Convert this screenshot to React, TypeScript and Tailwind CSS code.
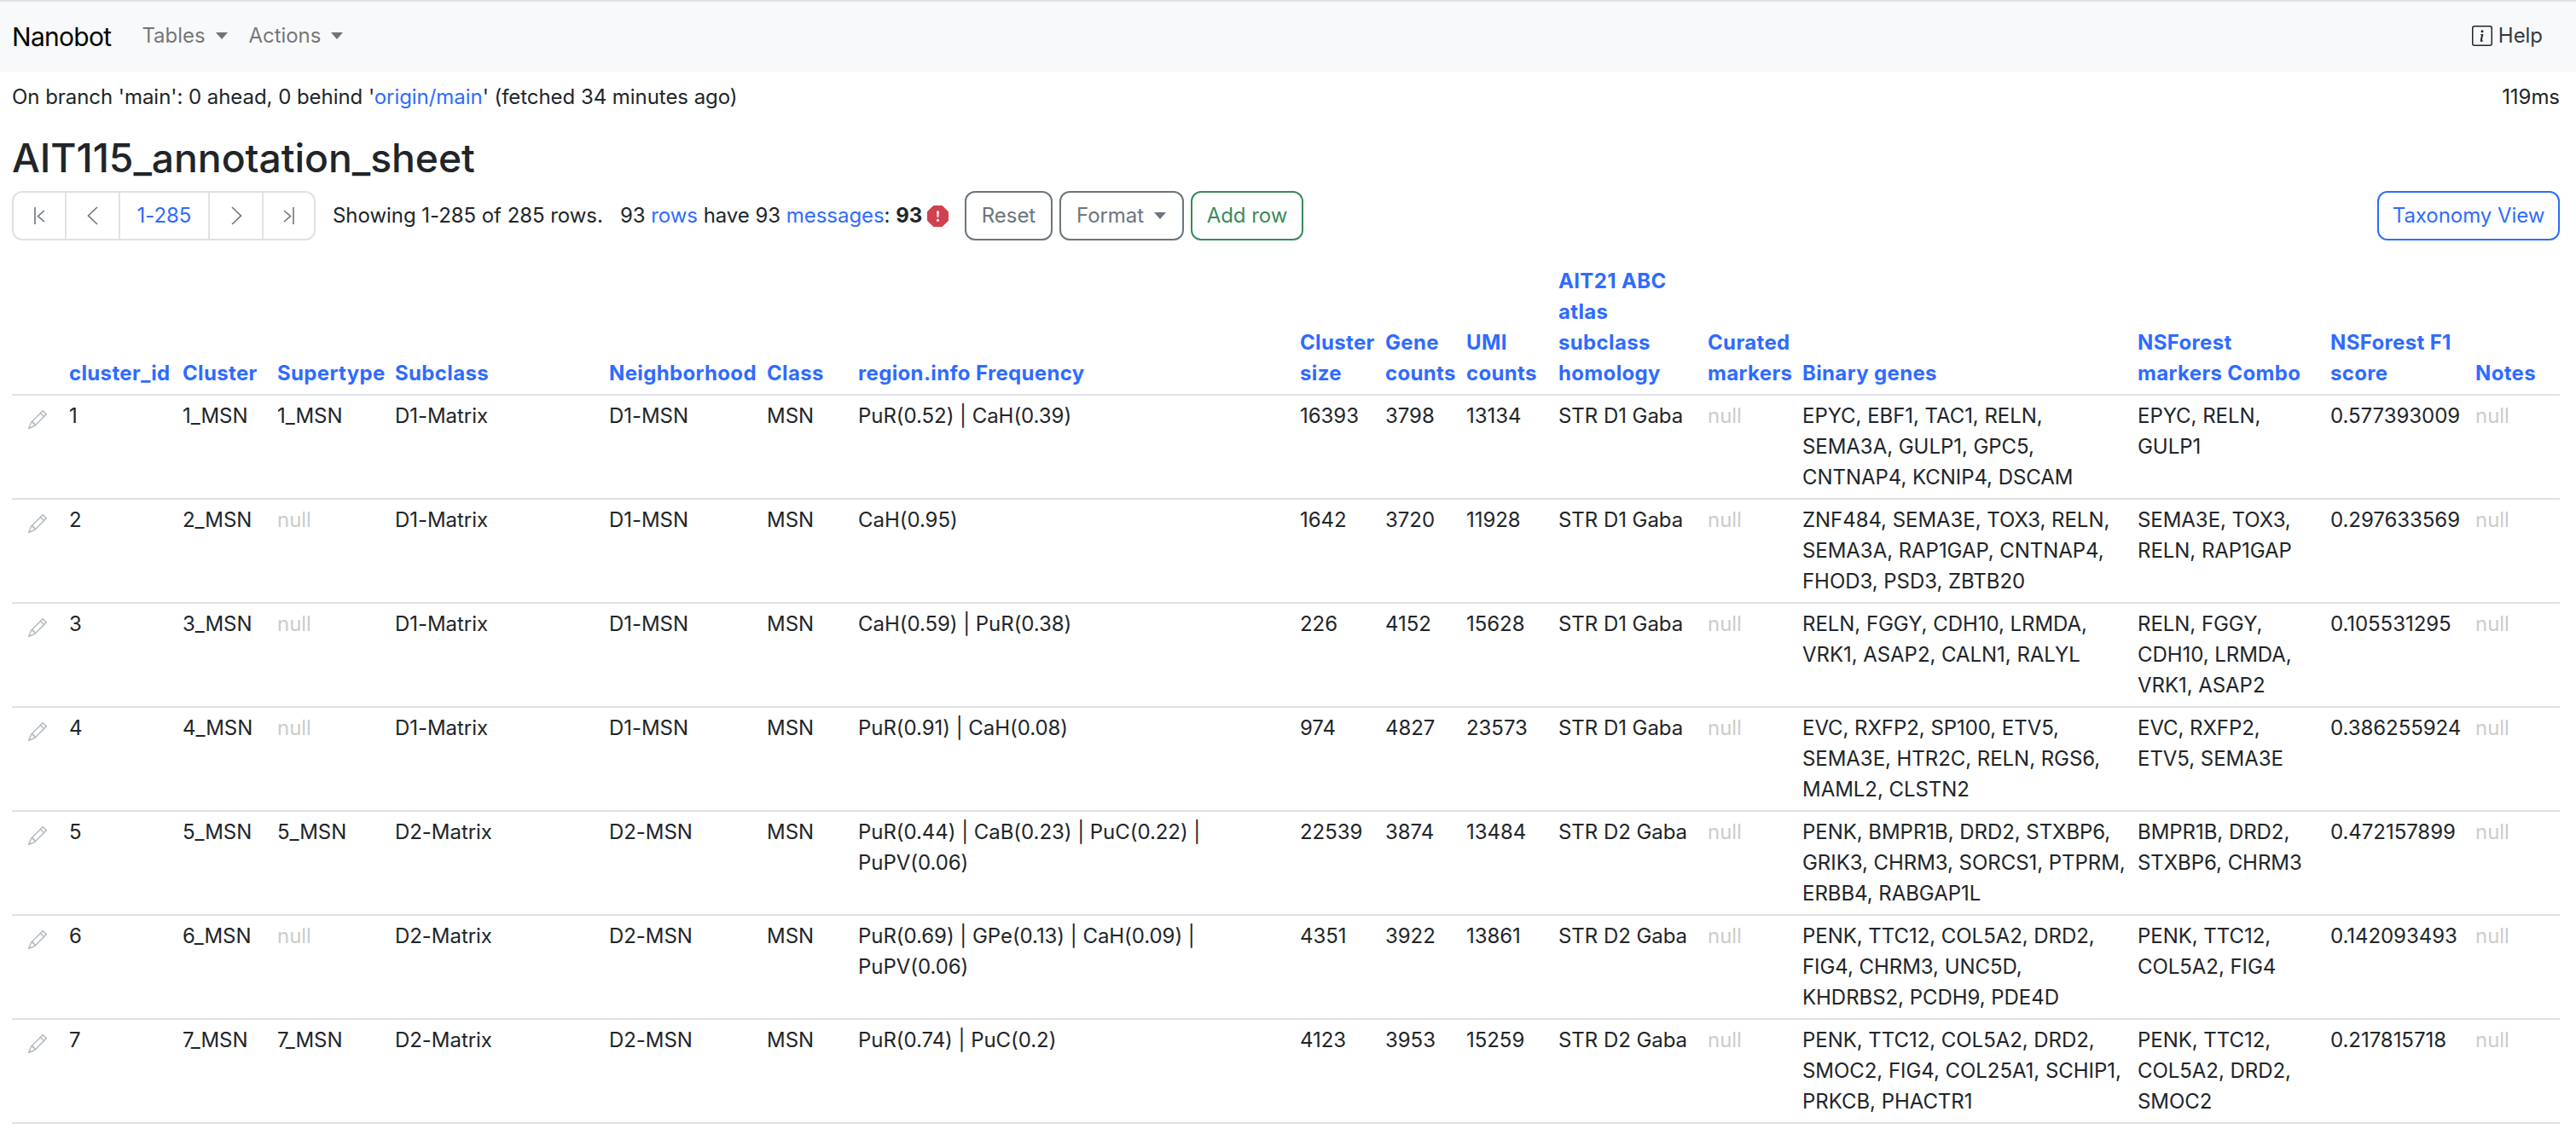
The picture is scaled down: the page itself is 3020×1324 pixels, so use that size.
const rows = [
  ["1", "1_MSN", "1_MSN", "D1-Matrix", "D1-MSN", "MSN", "PuR(0.52) | CaH(0.39)", "16393", "3798", "13134", "STR D1 Gaba", "null", "EPYC, EBF1, TAC1, RELN, SEMA3A, GULP1, GPC5, CNTNAP4, KCNIP4, DSCAM", "EPYC, RELN, GULP1", "0.577393009", "null"],
  ["2", "2_MSN", "null", "D1-Matrix", "D1-MSN", "MSN", "CaH(0.95)", "1642", "3720", "11928", "STR D1 Gaba", "null", "ZNF484, SEMA3E, TOX3, RELN, SEMA3A, RAP1GAP, CNTNAP4, FHOD3, PSD3, ZBTB20", "SEMA3E, TOX3, RELN, RAP1GAP", "0.297633569", "null"],
  ["3", "3_MSN", "null", "D1-Matrix", "D1-MSN", "MSN", "CaH(0.59) | PuR(0.38)", "226", "4152", "15628", "STR D1 Gaba", "null", "RELN, FGGY, CDH10, LRMDA, VRK1, ASAP2, CALN1, RALYL", "RELN, FGGY, CDH10, LRMDA, VRK1, ASAP2", "0.105531295", "null"],
  ["4", "4_MSN", "null", "D1-Matrix", "D1-MSN", "MSN", "PuR(0.91) | CaH(0.08)", "974", "4827", "23573", "STR D1 Gaba", "null", "EVC, RXFP2, SP100, ETV5, SEMA3E, HTR2C, RELN, RGS6, MAML2, CLSTN2", "EVC, RXFP2, ETV5, SEMA3E", "0.386255924", "null"],
  ["5", "5_MSN", "5_MSN", "D2-Matrix", "D2-MSN", "MSN", "PuR(0.44) | CaB(0.23) | PuC(0.22) | PuPV(0.06)", "22539", "3874", "13484", "STR D2 Gaba", "null", "PENK, BMPR1B, DRD2, STXBP6, GRIK3, CHRM3, SORCS1, PTPRM, ERBB4, RABGAP1L", "BMPR1B, DRD2, STXBP6, CHRM3", "0.472157899", "null"],
  ["6", "6_MSN", "null", "D2-Matrix", "D2-MSN", "MSN", "PuR(0.69) | GPe(0.13) | CaH(0.09) | PuPV(0.06)", "4351", "3922", "13861", "STR D2 Gaba", "null", "PENK, TTC12, COL5A2, DRD2, FIG4, CHRM3, UNC5D, KHDRBS2, PCDH9, PDE4D", "PENK, TTC12, COL5A2, FIG4", "0.142093493", "null"],
  ["7", "7_MSN", "7_MSN", "D2-Matrix", "D2-MSN", "MSN", "PuR(0.74) | PuC(0.2)", "4123", "3953", "15259", "STR D2 Gaba", "null", "PENK, TTC12, COL5A2, DRD2, SMOC2, FIG4, COL25A1, SCHIP1, PRKCB, PHACTR1", "PENK, TTC12, COL5A2, DRD2, SMOC2", "0.217815718", "null"],
];

const headers: [string[], string][] = [
  [["cluster_id"], "w-[133px]"],
  [["Cluster"], "w-[111px]"],
  [["Supertype"], "w-[138px]"],
  [["Subclass"], "w-[251px]"],
  [["Neighborhood"], "w-[185px]"],
  [["Class"], "w-[107px]"],
  [["region.info Frequency"], "w-[518px]"],
  [["Cluster", "size"], "w-[100px]"],
  [["Gene", "counts"], "w-[95px]"],
  [["UMI", "counts"], "w-[108px]"],
  [["AIT21 ABC", "atlas", "subclass", "homology"], "w-[175px]"],
  [["Curated", "markers"], "w-[111px]"],
  [["Binary genes"], "w-[393px]"],
  [["NSForest", "markers Combo"], "w-[226px]"],
  [["NSForest F1", "score"], "w-[170px]"],
  [["Notes"], "w-[107px]"],
];

function Pencil() {
  return (
    <svg viewBox="0 0 16 16" className="w-[22px] h-[22px] fill-[#adb5bd]">
      <path d="M12.146.146a.5.5 0 0 1 .708 0l3 3a.5.5 0 0 1 0 .708l-10 10a.5.5 0 0 1-.168.11l-5 2a.5.5 0 0 1-.65-.65l2-5a.5.5 0 0 1 .11-.168l10-10zM11.207 2.5 13.5 4.793 14.793 3.5 12.5 1.207 11.207 2.5zm1.586 3L10.5 3.207 4 9.707V10h.5a.5.5 0 0 1 .5.5v.5h.5a.5.5 0 0 1 .5.5v.5h.293l6.5-6.5zm-9.761 5.175-.106.106-1.528 3.821 3.821-1.528.106-.106A.5.5 0 0 1 5 12.5V12h-.5a.5.5 0 0 1-.5-.5V11h-.5a.5.5 0 0 1-.468-.325z" />
    </svg>
  );
}

function PageIcon({ d }: { d: string }) {
  return (
    <svg viewBox="0 0 24 24" className="w-[24px] h-[24px] fill-none stroke-[#6c757d] stroke-[1.6]">
      <path d={d} />
    </svg>
  );
}

function Caret({ color }: { color: string }) {
  return <span className={`inline-block ml-[12px] align-[4px] border-x-[7px] border-t-[8px] border-x-transparent ${color}`} />;
}

export default function App() {
  return (
    <div className="min-h-[1324px] bg-white text-[#212529] text-[24px] leading-[36px] tracking-[-0.05px] font-['Inter','Noto_Sans',sans-serif] overflow-hidden">
      <nav className="h-[84px] bg-[#f8f9fa] border-t-[2px] border-[#dee2e6] flex items-center pl-[14px] pr-[39px]">
        <span className="text-[30px] tracking-[-0.7px] text-black mr-[36px]">Nanobot</span>
        <span className="text-[rgba(0,0,0,0.55)] mr-[25px] -mt-[2px]">Tables<Caret color="border-t-[#6c757d]" /></span>
        <span className="text-[rgba(0,0,0,0.55)] -mt-[2px]">Actions<Caret color="border-t-[#6c757d]" /></span>
        <span className="ml-auto flex items-center gap-[7px] text-[#343a40] -mt-[2px]">
          <svg viewBox="0 0 16 16" className="w-[24px] h-[24px] fill-[#212529]">
            <path d="M14 1a1 1 0 0 1 1 1v12a1 1 0 0 1-1 1H2a1 1 0 0 1-1-1V2a1 1 0 0 1 1-1h12zM2 0a2 2 0 0 0-2 2v12a2 2 0 0 0 2 2h12a2 2 0 0 0 2-2V2a2 2 0 0 0-2-2H2z" />
            <path d="m8.93 6.588-2.29.287-.082.38.45.083c.294.07.352.176.288.469l-.738 3.468c-.194.897.105 1.319.808 1.319.545 0 1.178-.252 1.465-.598l.088-.416c-.2.176-.492.246-.686.246-.275 0-.375-.193-.304-.533L8.93 6.588zM9 4.5a1 1 0 1 1-2 0 1 1 0 0 1 2 0z" />
          </svg>
          Help
        </span>
      </nav>

      <div className="pl-[14px] pr-[19px]">
        <div className="flex justify-between pt-[12px] h-[56px]">
          <span>On branch 'main': 0 ahead, 0 behind '<a className="text-[#2f6bff]">origin/main</a>' (fetched 34 minutes ago)</span>
          <span>119ms</span>
        </div>
        <h1 className="text-[46.3px] leading-[58px] font-medium mt-[16px] mb-[10px]">AIT115_annotation_sheet</h1>

        <div className="flex items-center h-[58px]">
          <div className="flex h-[58px] w-[356px] border-2 border-[#dee2e6] rounded-[12px] divide-x-2 divide-[#dee2e6]">
            <span className="w-[62px] flex items-center justify-center"><PageIcon d="M7 2v20M18 6l-7.5 6.5L18 19" /></span>
            <span className="w-[63px] flex items-center justify-center"><PageIcon d="M17 2L6.5 12 17 22" /></span>
            <span className="w-[105px] flex items-center justify-center text-[#2f6bff]">1-285</span>
            <span className="w-[63px] flex items-center justify-center"><PageIcon d="M7 2l10.5 10L7 22" /></span>
            <span className="flex-1 flex items-center justify-center"><PageIcon d="M17 2v20M6 6l7.5 6.5L6 19" /></span>
          </div>
          <span className="ml-[20px] w-[689px] whitespace-pre">Showing 1-285 of 285 rows.   93 <a className="text-[#2f6bff]">rows</a> have 93 <a className="text-[#2f6bff]">messages</a>: <b>93</b></span>
          <svg viewBox="0 0 16 16" className="w-[25px] h-[25px] ml-[8px] fill-[#cf414f]">
            <path d="M11.46.146A.5.5 0 0 0 11.107 0H4.893a.5.5 0 0 0-.353.146L.146 4.54A.5.5 0 0 0 0 4.893v6.214a.5.5 0 0 0 .146.353l4.394 4.394a.5.5 0 0 0 .353.146h6.214a.5.5 0 0 0 .353-.146l4.394-4.394a.5.5 0 0 0 .146-.353V4.893a.5.5 0 0 0-.146-.353L11.46.146zM8 4c.535 0 .954.462.9.995l-.35 3.507a.552.552 0 0 1-1.1 0L7.1 4.995A.905.905 0 0 1 8 4zm.002 6a1 1 0 1 1 0 2 1 1 0 0 1 0-2z" />
          </svg>
          <button className="ml-[19px] h-[58px] w-[103px] border-2 border-[#6c757d] rounded-[12px] text-[#6c757d]">Reset</button>
          <button className="ml-[8px] h-[58px] w-[146px] border-2 border-[#6c757d] rounded-[12px] text-[#6c757d] text-left pl-[18px]">Format<Caret color="border-t-[#6c757d]" /></button>
          <button className="ml-[8px] h-[58px] w-[132px] border-2 border-[#3a8a5a] rounded-[12px] text-[#3a8a5a]">Add row</button>
          <button className="ml-auto h-[58px] w-[214px] border-2 border-[#2f6bff] rounded-[12px] text-[#2f6bff]">Taxonomy View</button>
        </div>

        <table className="table-fixed border-collapse w-[2987px] mt-[30px]">
          <thead>
            <tr className="border-b-2 border-[#dee2e6]">
              <th className="w-[59px]" />
              {headers.map(([lines, w]) => (
                <th key={lines.join()} className={`${w} text-left align-bottom font-bold tracking-[0.35px] text-[#2f6bff] px-[8px] pb-[6px] whitespace-nowrap`}>
                  {lines.map((l) => <div key={l}>{l}</div>)}
                </th>
              ))}
            </tr>
          </thead>
          <tbody>
            {rows.map((row) => (
              <tr key={row[0]} className="border-b-2 border-[#dee2e6] h-[122px]">
                <td className="align-top pl-[19px] pt-[17px]"><Pencil /></td>
                {row.map((cell, i) => (
                  <td key={i} className={`align-top pl-[8px] pt-[6px] pb-[6px] ${i === 12 ? "pr-[2px]" : "pr-[8px]"} ${cell === "null" ? "text-[#ccc]" : ""}`}>{cell}</td>
                ))}
              </tr>
            ))}
          </tbody>
        </table>
      </div>
    </div>
  );
}
